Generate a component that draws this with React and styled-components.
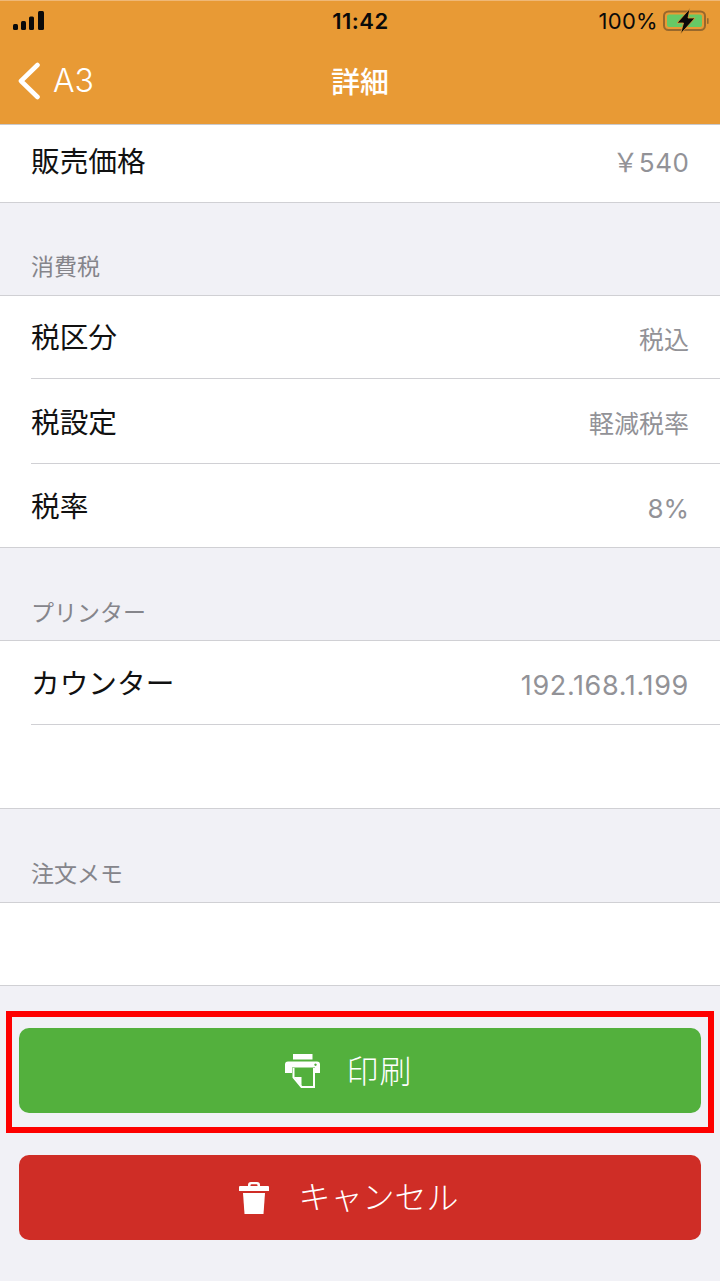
import React from "react";
import styled, { createGlobalStyle } from "styled-components";

const Global = createGlobalStyle`
  html, body { margin: 0; padding: 0; background: #f1f1f6; }
  * { box-sizing: border-box; }
  body { font-family: "Inter", "Liberation Sans", "Noto Sans CJK JP", sans-serif; }
`;
const CJK = `"Noto Sans CJK JP", "Liberation Sans", sans-serif`;

const Page = styled.div`
  width: 720px; height: 1281px; overflow: hidden; background: #f1f1f6;
  display: flex; flex-direction: column;
`;
const Header = styled.header`
  height: 125px; background: #e89a35; border-bottom: 1px solid #c9c9cc;
  border-top: 1px solid #efb877; display: flex; flex-direction: column;
`;
const Status = styled.div`
  height: 39px; display: grid; grid-template-columns: 1fr auto 1fr; align-items: center;
  padding: 0 11px 0 12px; color: #0a0a0a;
`;
const Time = styled.div`font-size: 22px; font-weight: 600; letter-spacing: .5px; margin-top: 1px;`;
const StatusRight = styled.div`
  display: flex; justify-content: flex-end; align-items: center; gap: 5px;
  font-size: 22px; font-weight: 400; font-family: "Inter", sans-serif; letter-spacing: .3px;
`;
const Nav = styled.div`
  flex: 1; display: grid; grid-template-columns: 1fr auto 1fr; align-items: center; color: #fff;
  padding: 0 17px 3px;
`;
const Back = styled.div`display: flex; align-items: center; gap: 12px; font-size: 32px; font-weight: 300;`;
const Title = styled.div`font-family: ${CJK}; font-size: 29px; font-weight: 500; margin-top: -2px;`;
const Group = styled.section`
  background: #fff; border-top: ${p => (p.$noTop ? "0" : "1px solid #d0d0d4")};
  border-bottom: 1px solid #d0d0d4;
`;
const Row = styled.div`
  height: ${p => p.$h || 84}px; margin-left: 31px; padding-right: 31px;
  display: flex; justify-content: space-between; align-items: center;
  border-bottom: ${p => (p.$line ? "1px solid #d0d0d4" : "0")};
`;
const Name = styled.span`
  font-family: ${CJK}; font-size: 28.7px; color: #111; line-height: 1; position: relative; top: ${p => p.$top ?? 0}px;
`;
const Value = styled.span`
  font-family: ${p => (p.$latin ? `"Inter", ${CJK}` : CJK)}; font-size: ${p => p.$size || 25}px;
  color: #929297; line-height: 1; letter-spacing: ${p => p.$ls || 0}; position: relative; top: ${p => p.$top || 1}px;
  font-variant-numeric: ${p => (p.$tab ? "tabular-nums" : "normal")};
`;
const SectionLabel = styled.div`
  height: ${p => p.$h}px; padding: 0 0 ${p => p.$pb || 18}px 31px; display: flex; align-items: flex-end;
  font-family: ${CJK}; font-size: 23px; line-height: 1; color: #85858b;
`;
const Frame = styled.div`
  margin: ${p => p.$mt}px 6px 0; border: 6px solid #fe0000; padding: 11px 7px 14px;
`;
const Button = styled.div`
  height: 85px; border-radius: 10px; background: ${p => p.$bg}; color: #fff;
  display: flex; justify-content: center; align-items: center; gap: ${p => p.$gap}px;
  font-family: ${CJK}; font-size: 32px; font-weight: 300; line-height: 1; padding-right: 22px;
`;
const SecondButton = styled(Button)`margin: 22px 19px 0;`;
const Label = styled.span`letter-spacing: ${p => p.$ls || 0}; position: relative; top: ${p => p.$top}px;`;

const Signal = () => (
  <svg width="34" height="20" viewBox="0 0 34 20" fill="#0a0a0a">
    <rect x="1" y="13" width="5" height="6" rx="1.5" />
    <rect x="9" y="10" width="5" height="9" rx="1.5" />
    <rect x="17" y="5.5" width="5" height="13.5" rx="1.5" />
    <rect x="26" y="0" width="6" height="19" rx="1.5" />
  </svg>
);
const Battery = () => (
  <svg width="46" height="26" viewBox="0 0 46 26">
    <rect x="1" y="3.5" width="41" height="18.5" rx="4.5" fill="none" stroke="#98682c" strokeWidth="2" />
    <rect x="4" y="6.5" width="35" height="12.5" rx="2" fill="#66c966" />
    <rect x="44" y="10" width="1.6" height="6" rx=".8" fill="#98682c" />
    <path d="M27 .5 L14 15 H20.5 L17.5 26 L32 10 H25 Z" fill="#0a0a0a" stroke="#e89a35" strokeWidth=".8" />
  </svg>
);
const Chevron = () => (
  <svg width="24" height="38" viewBox="0 0 24 38" fill="none" stroke="#fff" strokeWidth="4.6" strokeLinecap="round" strokeLinejoin="round">
    <path d="M20.5 3 L4 19 L20.5 35" />
  </svg>
);
const PrinterIcon = () => (
  <svg width="35" height="34" viewBox="0 0 35 34" fill="#fff">
    <path d="M8 0 H27.5 V5.5 H8 Z" />
    <path fillRule="evenodd" d="M3 7.5 H32 Q35 7.5 35 10.5 V19 H30 V13.5 H7 V19 H0 V10.5 Q0 7.5 3 7.5 Z M30.5 9.5 a1.2 1.2 0 1 0 .01 0 Z" />
    <path fill="none" stroke="#fff" strokeWidth="2" d="M8.5 14 V23.5 L16.5 33 H29 V14" />
    <path d="M9 23 H16.5 V32 Z" />
  </svg>
);
const TrashIcon = () => (
  <svg width="30" height="34" viewBox="0 0 30 34" fill="#fff">
    <path fillRule="evenodd" d="M9 4 Q9 1 12 1 H18 Q21 1 21 4 V5 H29 Q30 5 30 6 V10 H0 V6 Q0 5 1 5 H9 Z M11.5 5 H18.5 V4.2 Q18.5 3.2 17.5 3.2 H12.5 Q11.5 3.2 11.5 4.2 Z" />
    <path d="M4 12 H26 L24.5 33 H5.5 Z" />
  </svg>
);

export default function App() {
  return (
    <Page>
      <Global />
      <Header>
        <Status>
          <Signal />
          <Time>11:42</Time>
          <StatusRight>100%<Battery /></StatusRight>
        </Status>
        <Nav>
          <Back><Chevron />A3</Back>
          <Title>詳細</Title>
          <div />
        </Nav>
      </Header>
      <Group $noTop>
        <Row $h={77}>
          <Name $top={-3}>販売価格</Name>
          <Value $size={26} $tab $latin $top={-1}>￥540</Value>
        </Row>
      </Group>
      <SectionLabel $h={92}>消費税</SectionLabel>
      <Group>
        <Row $line $h={83}><Name $top={-1}>税区分</Name><Value>税込</Value></Row>
        <Row $line $h={85}><Name>税設定</Name><Value>軽減税率</Value></Row>
        <Row $h={83}><Name>税率</Name><Value $size={26} $latin $top={3}>8%</Value></Row>
      </Group>
      <SectionLabel $h={92} $pb={17}>プリンター</SectionLabel>
      <Group>
        <Row $line><Name>カウンター</Name><Value $size={27} $ls=".65px" $latin $top={3}>192.168.1.199</Value></Row>
        <Row $h={83} />
      </Group>
      <SectionLabel $h={93}>注文メモ</SectionLabel>
      <Group><Row $h={82} /></Group>
      <Frame $mt={25}>
        <Button $bg="#53b03d" $gap={26}><PrinterIcon /><Label $ls="1px" $top={-2}>印刷</Label></Button>
      </Frame>
      <SecondButton $bg="#cf2d26" $gap={29}><TrashIcon /><Label $top={-3}>キャンセル</Label></SecondButton>
    </Page>
  );
}
